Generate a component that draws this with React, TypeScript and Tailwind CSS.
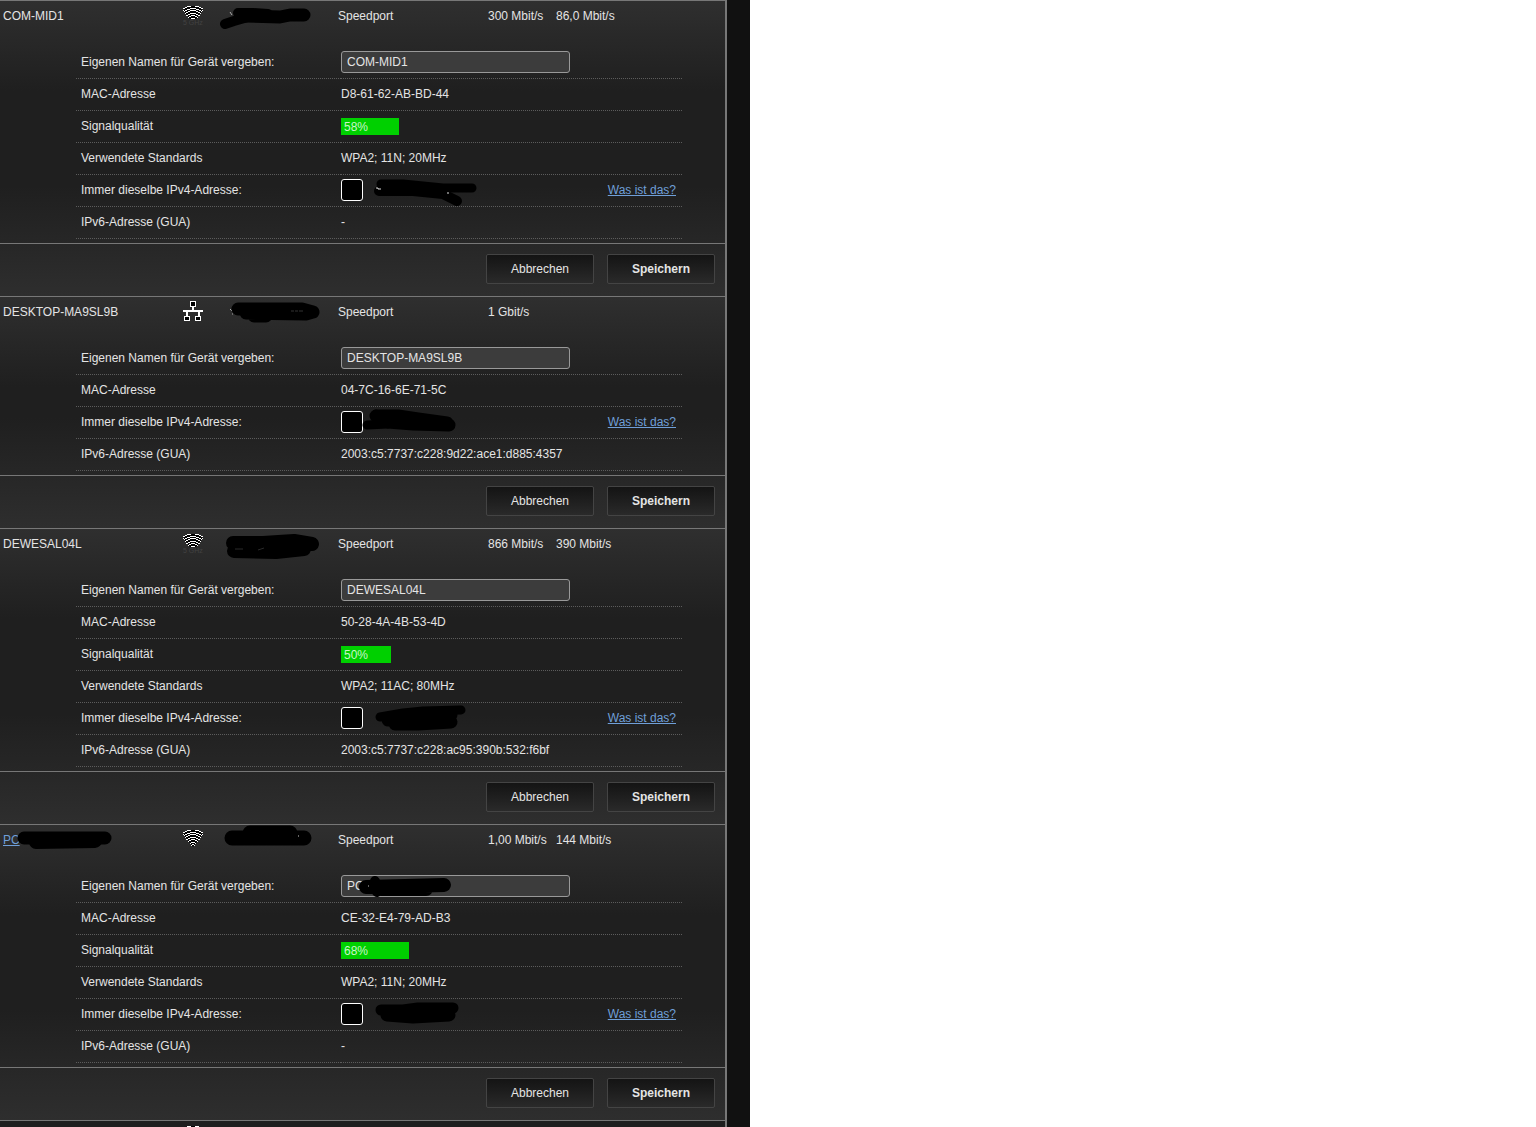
import React from 'react';

interface Stroke {
  d: string;
  width: number;
  color?: string;
}

interface Device {
  id: string;
  name: string;
  linked?: boolean;
  connection: 'wifi' | 'wifi5' | 'lan';
  down: string;
  up?: string;
  mac: string;
  signal?: number;
  standards?: string;
  ipv6: string;
  headerMarks: Stroke[];
  ipMarks: Stroke[];
}

const devices: Device[] = [
  {
    id: 'com-mid1',
    name: 'COM-MID1',
    connection: 'wifi5',
    down: '300 Mbit/s',
    up: '86,0 Mbit/s',
    mac: 'D8-61-62-AB-BD-44',
    signal: 58,
    standards: 'WPA2; 11N; 20MHz',
    ipv6: '-',
    headerMarks: [
      { d: 'M12 11L14 14', width: 1, color: '#aaa' },
      { d: 'M7 23L16 20L30 16M20 12L35 12L50 13', width: 10 },
      { d: 'M26 15L62 16L72 14L86 14', width: 13 },
    ],
    ipMarks: [
      { d: 'M18 8L40 8L80 12L109 12', width: 9 },
      { d: 'M16 15L50 15L80 18L94 25', width: 10 },
      { d: 'M13 12h2v1h3M85 16v2', width: 1, color: '#ddd' },
    ],
  },
  {
    id: 'desktop',
    name: 'DESKTOP-MA9SL9B',
    connection: 'lan',
    down: '1 Gbit/s',
    mac: '04-7C-16-6E-71-5C',
    ipv6: '2003:c5:7737:c228:9d22:ace1:d885:4357',
    headerMarks: [
      { d: 'M12 12L14 14M14 17h1', width: 1, color: '#aaa' },
      { d: 'M20 12L84 12L95 15L88 17L28 16M36 19L48 19', width: 13 },
      { d: 'M73 14h3m1 0h3m1 0h4', width: 1, color: '#333' },
    ],
    ipMarks: [
      { d: 'M4 17L25 16M13 6L20 8', width: 9 },
      { d: 'M13 8L35 8L55 11L84 15M25 14L50 16L86 17', width: 13 },
    ],
  },
  {
    id: 'dewesal',
    name: 'DEWESAL04L',
    connection: 'wifi5',
    down: '866 Mbit/s',
    up: '390 Mbit/s',
    mac: '50-28-4A-4B-53-4D',
    signal: 50,
    standards: 'WPA2; 11AC; 80MHz',
    ipv6: '2003:c5:7737:c228:ac95:390b:532:f6bf',
    headerMarks: [
      { d: 'M15 14L45 14L76 12L94 15M16 22L58 23L86 20', width: 14 },
      { d: 'M17 20h8M40 21l6 -2', width: 1, color: '#2a2a2a' },
    ],
    ipMarks: [
      { d: 'M17 13L40 9L60 7L98 6', width: 9 },
      { d: 'M25 16L55 12L88 11M32 20L55 20L88 18', width: 13 },
    ],
  },
  {
    id: 'pc',
    name: 'PC',
    linked: true,
    connection: 'wifi',
    down: '1,00 Mbit/s',
    up: '144 Mbit/s',
    mac: 'CE-32-E4-79-AD-B3',
    signal: 68,
    standards: 'WPA2; 11N; 20MHz',
    ipv6: '-',
    headerMarks: [
      { d: 'M14 13L86 13M32 8L72 8', width: 15 },
      { d: 'M80 11h1', width: 1, color: '#ccc' },
    ],
    ipMarks: [
      { d: 'M18 10L40 10L55 8L90 8', width: 11 },
      { d: 'M24 15L50 17L86 15', width: 13 },
    ],
  },
];

const Marks: React.FC<{ strokes: Stroke[]; className: string }> = ({ strokes, className }) => (
  <svg className={`overflow-visible pointer-events-none ${className}`} fill="none" aria-hidden="true">
    {strokes.map((s, i) => (
      <path key={i} d={s.d} stroke={s.color ?? '#000'} strokeWidth={s.width} strokeLinecap={s.width > 1 ? 'round' : 'butt'} strokeLinejoin="round" />
    ))}
  </svg>
);

const WifiIcon: React.FC<{ band?: boolean }> = ({ band }) => (
  <svg width="24" height="22" viewBox="0 0 24 22" aria-hidden="true">
    <svg width="22" height={band ? 14 : 20} viewBox={band ? '0 0 22 14' : '0 0 22 20'}>
      <path d="M1 5Q4 1 11 1T21 5L11 18Z" fill="#000" />
      <g fill="none" stroke="#fff" strokeWidth="1" shapeRendering="crispEdges">
        <path d="M5 1.5h4M13 1.5h4M3 2.5h2M17 2.5h2M1 3.5h2M19 3.5h2" />
        <path d="M8 3.5h6M5 4.5h3M14 4.5h3M3 5.5h2M17 5.5h2M1 5.5h1M20 5.5h1M2 6.5h1M19 6.5h1" />
        <path d="M8 5.5h6M6 6.5h2M14 6.5h2M4 7.5h2M16 7.5h2M3 8.5h1M18 8.5h1" />
        <path d="M8 8.5h6M6 9.5h2M14 9.5h2M4 10.5h2M16 10.5h2" />
        <path d="M9 10.5h4M7 11.5h2M13 11.5h2M6 12.5h1M15 12.5h1" />
        <path d="M9 13.5h4M8 14.5h1M13 14.5h1M10 15.5h2M9 16.5h1M12 16.5h1" />
      </g>
    </svg>
    {band && <text x="1" y="20" fontSize="7" fill="#424242" fontFamily="Liberation Sans, sans-serif">5 GHz</text>}
  </svg>
);

const LanIcon: React.FC = () => (
  <svg width="22" height="22" viewBox="0 0 22 22" shapeRendering="crispEdges" aria-hidden="true">
    <path d="M10 5h2v5h-2zM1 9h20v2H1zM4 10h2v6H4zM16 10h2v6h-2z" fill="#fff" />
    <path d="M8 0h6v6H8zM2 15h6v5H2zM13 15h6v5h-6z" fill="#fff" />
    <path d="M9 1h4v4H9zM3 16h4v3H3zM14 16h4v3h-4z" fill="#000" />
  </svg>
);

const Row: React.FC<{ label: string; htmlFor?: string; children: React.ReactNode }> = ({ label, htmlFor, children }) => (
  <tr className="h-8">
    <th scope="row" className="w-[265px] border-b border-dotted border-[#5c5c5c] p-0 pb-px pl-[5px] text-left font-normal">
      {htmlFor ? <label htmlFor={htmlFor}>{label}</label> : label}
    </th>
    <td className="border-b border-dotted border-[#5c5c5c] p-0 pr-[6px] pb-px">{children}</td>
  </tr>
);

const linkClass = 'text-[#6f9fd8] underline';
const buttonClass = 'h-[30px] w-[108px] rounded-xs border border-[#444] bg-linear-to-b from-[#141414] to-[#2a2a2a]';

const DeviceSection: React.FC<{ device: Device }> = ({ device }) => (
  <section className="border-t border-[#777] bg-[linear-gradient(#2f2f2f,#1f1f1f_90px,#1f1f1f_calc(100%-110px),#2e2e2e)]">
    <header className="grid h-[46px] grid-cols-[182px_36px_120px_150px_68px_1fr] items-start">
      <div className="relative pt-[7px] pl-[3px]">
        {device.linked ? <a href="#" className={linkClass}>{device.name}</a> : device.name}
        {device.linked && (
          <Marks className="absolute top-0 left-0 h-[30px] w-[120px]" strokes={[{ d: 'M24 13L105 13', width: 13 }, { d: 'M36 17L95 16', width: 14 }]} />
        )}
      </div>
      <div className="pt-1">
        {device.connection === 'lan' ? <LanIcon /> : <WifiIcon band={device.connection === 'wifi5'} />}
      </div>
      <Marks className="h-[30px] w-[110px]" strokes={device.headerMarks} />
      <div className="pt-[7px]">Speedport</div>
      <div className="pt-[7px]">{device.down}</div>
      <div className="pt-[7px]">{device.up}</div>
    </header>

    <div className="pr-[43px] pb-1 pl-[76px]">
      <table className="w-full table-fixed border-separate border-spacing-0">
        <tbody>
          <Row label="Eigenen Namen für Gerät vergeben:" htmlFor={`name-${device.id}`}>
            <div className="relative flex">
              <input
                id={`name-${device.id}`}
                type="text"
                defaultValue={device.name}
                className="h-[22px] w-[229px] rounded-[3px] border border-[#999] bg-[#3c3c3c] px-[5px]"
              />
              {device.linked && (
                <Marks
                  className="absolute top-0 left-0 h-[22px] w-[120px]"
                  strokes={[
                    { d: 'M25 12L103 10M40 14L85 14', width: 14 },
                    { d: 'M34 6L36 17', width: 10 },
                    { d: 'M27 11h1', width: 1, color: '#bbb' },
                  ]}
                />
              )}
            </div>
          </Row>
          <Row label="MAC-Adresse">{device.mac}</Row>
          {device.signal && (
            <Row label="Signalqualität">
              <div className="w-[100px]">
                <div className="h-[17px] bg-[#00d000] pl-[3px] leading-[18px] text-[#c8f5c8]" style={{ width: `${device.signal}%` }}>
                  {device.signal}%
                </div>
              </div>
            </Row>
          )}
          {device.standards && <Row label="Verwendete Standards">{device.standards}</Row>}
          <Row label="Immer dieselbe IPv4-Adresse:" htmlFor={`ip-${device.id}`}>
            <div className="flex items-center">
              <input id={`ip-${device.id}`} type="checkbox" className="size-[22px] appearance-none rounded-[3px] border border-white bg-black" />
              <Marks className="h-[28px] w-[120px]" strokes={device.ipMarks} />
              <a href="#" className={`ml-auto ${linkClass}`}>Was ist das?</a>
            </div>
          </Row>
          <Row label="IPv6-Adresse (GUA)">{device.ipv6}</Row>
        </tbody>
      </table>
    </div>

    <footer className="flex justify-end gap-[13px] border-t border-[#777] px-[10px] pt-[10px] pb-3">
      <button type="button" className={buttonClass}>Abbrechen</button>
      <button type="button" className={`${buttonClass} font-bold`}>Speichern</button>
    </footer>
  </section>
);

export default function App() {
  return (
    <div className="h-screen overflow-hidden bg-white">
      <main className="min-h-full max-w-[750px] bg-[#111] pr-[23px] font-['Liberation_Sans',Arial,sans-serif] text-[12px] leading-4 text-[#e4e4e4]">
        <div className="border-r-2 border-[#777] bg-[#1f1f1f]">
          {devices.map((device) => (
            <DeviceSection key={device.id} device={device} />
          ))}
          <section className="border-t border-[#777] pt-1 pb-8 pl-[182px]">
            <WifiIcon />
          </section>
        </div>
      </main>
    </div>
  );
}
